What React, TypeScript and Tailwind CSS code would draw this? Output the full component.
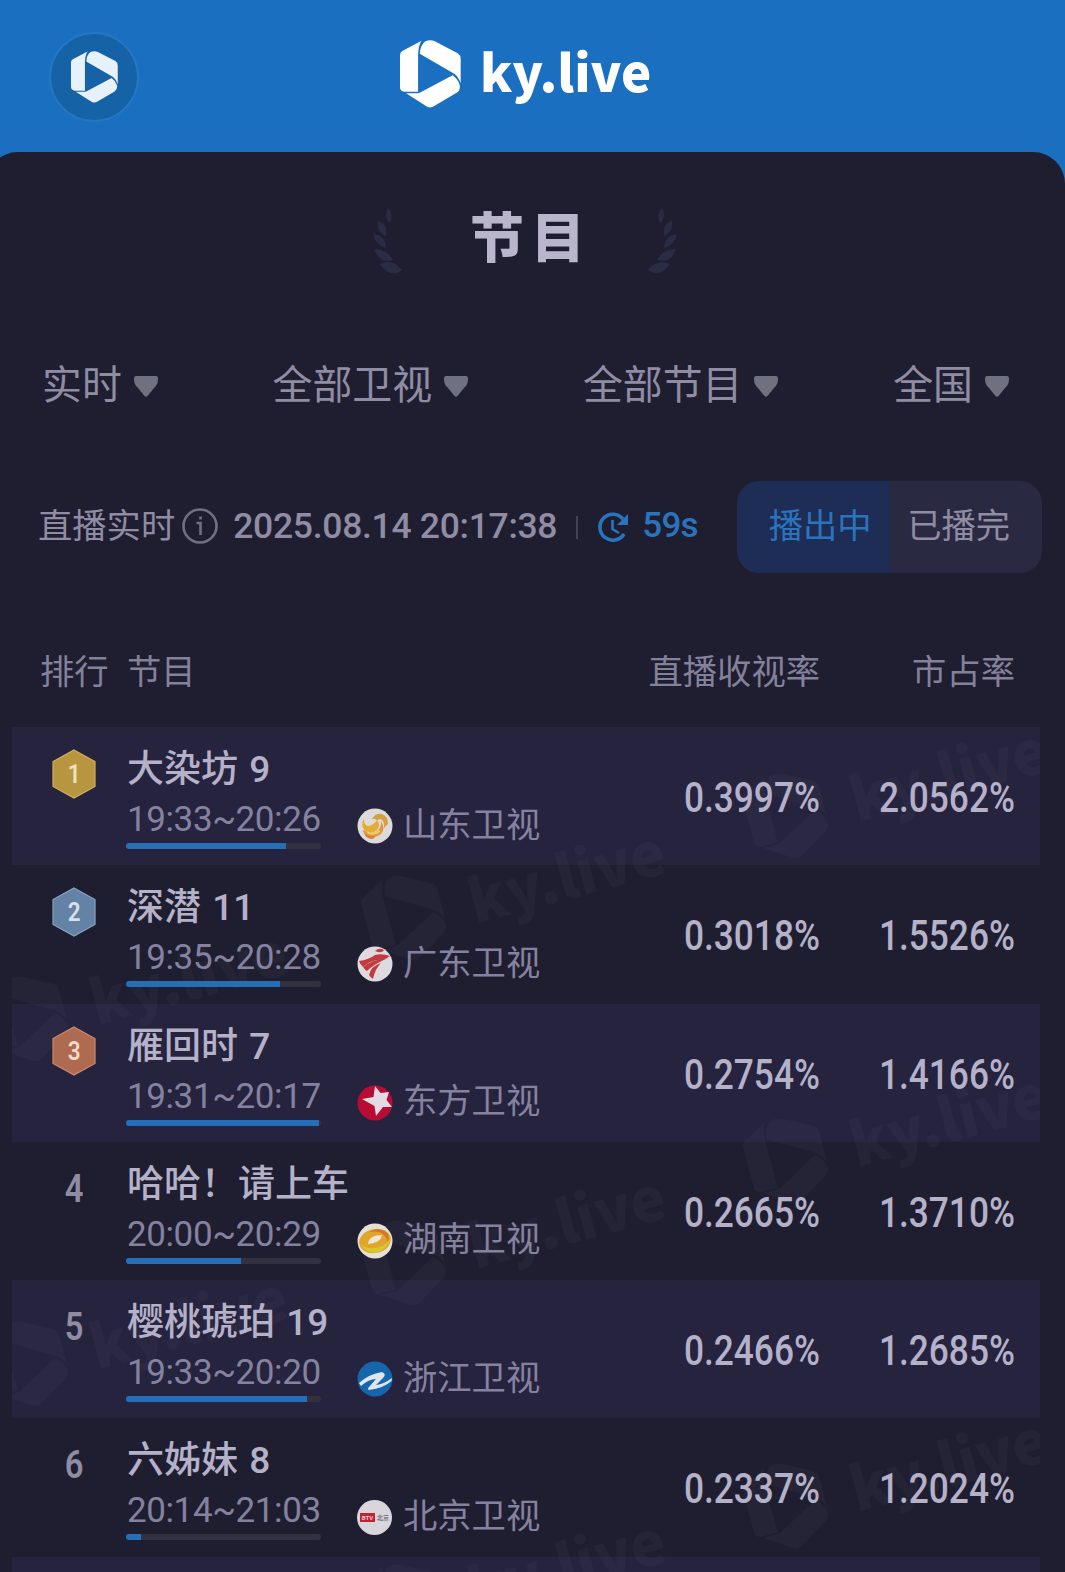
import type { ReactNode } from "react";

type Show = {
  title: string;
  time: string;
  progress: number;
  channel: string;
  logo: ReactNode;
  rate: string;
  share: string;
};

function LogoMark({ className }: { className: string }) {
  return (
    <svg viewBox="0 0 182 206" className={className} fill="currentColor" preserveAspectRatio="none">
      <path d="M0 46Q0 37 7 33L64 2Q55 16 54 44V157H13Q0 154 0 143Z" />
      <path d="M59 42Q61 14 76 4Q90 -3 104 4L172 40Q181 46 181 56V132Q176 114 163 103Z" />
      <path d="M18 161L54 161Q62 160 66 156L157 107Q173 118 178 136Q181 152 169 160L101 201Q91 207 81 202Z" />
    </svg>
  );
}

function Laurel({ className }: { className: string }) {
  return (
    <svg viewBox="0 0 30 66" className={className} fill="#2a2b45">
      <path d="M15 0Q21 6 17 15Q10 9 15 0Z" />
      <path d="M5 13Q15 16 13 28Q3 24 5 13Z" />
      <path d="M0 26Q12 27 13 40Q2 37 0 26Z" />
      <path d="M1 41Q14 41 20 52Q6 56 1 41Z" />
      <path d="M7 56Q20 50 29 62Q17 71 7 56Z" />
    </svg>
  );
}

function Filter({ label }: { label: string }) {
  return (
    <div className="flex items-center gap-[12px]">
      <span className="text-[39.9px] leading-[56px] text-[#8f8ca3]">{label}</span>
      <svg viewBox="0 0 24 21" className="h-[21px] w-[24px]" fill="#70717f">
        <path d="M2 0H22Q24 0 24 3Q24 9 20 12L13.500 20Q12 21.500 10.500 20L4 12Q0 9 0 3Q0 0 2 0Z" />
      </svg>
    </div>
  );
}

const medals = [
  { fill: "#b8963f", edge: "#d0b05c", text: "text-[#eee2bd]" },
  { fill: "#6481a6", edge: "#8aa3c0", text: "text-[#d8e0ec]" },
  { fill: "#ae6b50", edge: "#c98a70", text: "text-[#f0d9cf]" },
];

function Rank({ n }: { n: number }) {
  const medal = medals[n - 1];
  if (!medal) {
    return (
      <div className="mt-[24px] ml-[40px] h-[46px] w-[44px] text-center text-[39px] leading-[46px] font-semibold text-[#8f8ca3]">
        <span className="inline-block scale-x-[0.84]">{n}</span>
      </div>
    );
  }
  return (
    <div className="mt-[22px] ml-[40px] grid h-[50px] w-[44px] place-items-center">
      <svg viewBox="0 0 44 50" className="col-start-1 row-start-1 h-[50px] w-[44px]">
        <path d="M22 1L43 12.500V37.500L22 49L1 37.500V12.500Z" fill={medal.fill} stroke={medal.edge} strokeWidth="1.200" />
      </svg>
      <span className={`col-start-1 row-start-1 mt-[2px] scale-x-90 text-[25px] leading-[28px] font-semibold ${medal.text}`}>{n}</span>
    </div>
  );
}

const shandong = (
  <svg viewBox="0 0 36 36" className="size-[36px]">
    <circle cx="18" cy="18" r="17.500" fill="#dddadb" />
    <path d="M7 10Q6 15 10 18Q16 18 20 12Q24 16 20 22Q14 27 8 23Q3 17 7 10Z" fill="#e3ad30" />
    <path d="M15 11Q18 5 25 6Q31 8 31 16L27 20Q28 12 23 11Q20 13 18 11Z" fill="#d3a13f" />
    <path d="M6 22Q12 26 19 24Q25 20 24 13Q29 20 24 26Q18 31 11 28Q6 26 6 22Z" fill="#e2983a" />
    <path d="M10 24Q16 28 23 23" stroke="#efd266" strokeWidth="1.800" fill="none" />
    <path d="M7 25Q12 29 19 28L16 31Q9 31 7 25Z" fill="#dd7c45" />
  </svg>
);

const guangdong = (
  <svg viewBox="0 0 36 36" className="size-[36px]">
    <circle cx="18" cy="18" r="17.500" fill="#dedbe0" />
    <path d="M2 15Q11 14 18 9Q25 7 33 10Q28 14 20 14Q11 16 6 21Q3 18 2 15Z" fill="#c33a3e" />
    <path d="M6 21Q14 14 31 12Q17 18 10 25Q8 24 6 21Z" fill="#c33a3e" />
    <path d="M12 29Q14 20 24 17Q18 23 16 33Q13 31 12 29Z" fill="#c33a3e" />
    <path d="M18 5Q22 1 27 4Q25 8 18 5Z" fill="#c33a3e" />
  </svg>
);

const dongfang = (
  <svg viewBox="0 0 36 36" className="size-[36px]">
    <circle cx="18" cy="18" r="17.500" fill="#b90c35" />
    <path d="M18 1L23.500 8L32 7L29.500 15L35 22L26 22L19 31L17.500 21L5 14L16.500 12Z" fill="#e2dbe3" />
  </svg>
);

const hunan = (
  <svg viewBox="0 0 36 36" className="size-[36px]">
    <circle cx="18" cy="18" r="17.500" fill="#e4e0da" />
    <ellipse cx="18" cy="18" rx="16" ry="12" fill="#e0a52a" transform="rotate(-12 18 18)" />
    <path d="M3 21Q8 30 19 30Q31 26 34 15Q28 24 18 25Q9 26 3 21Z" fill="#d9c62e" />
    <path d="M12 9Q20 4 28 8Q34 13 30 19Q30 12 22 9Q17 8 12 9Z" fill="#d4752b" />
    <path d="M11 21Q12 12 25 12Q24 20 11 21Z" fill="#eee6d8" />
  </svg>
);

const zhejiang = (
  <svg viewBox="0 0 36 36" className="size-[36px]">
    <circle cx="18" cy="18" r="17.500" fill="#1666ab" />
    <path d="M2 22Q12 13 25 11Q30 13 26 17L19 24Q27 23 35 17L34.500 20Q27 27 12 29Q10 28 12 26L19 18Q12 18 4 25Z" fill="#dfe5ef" />
  </svg>
);

const beijing = (
  <div className="flex size-[35px] items-center justify-center gap-[2px] rounded-full bg-[#d8d6dc]">
    <span className="h-[9px] w-[15px] bg-[#bd2530] text-center text-[6px] leading-[9px] font-bold text-[#ecc9cb]">BTV</span>
    <span className="w-[12px] text-[6px] leading-[9px] font-bold whitespace-nowrap text-[#77757c]">北京</span>
  </div>
);

const shows: Show[] = [
  { title: "大染坊 9", time: "19:33~20:26", progress: 82, channel: "山东卫视", logo: shandong, rate: "0.3997%", share: "2.0562%" },
  { title: "深潜 11", time: "19:35~20:28", progress: 79, channel: "广东卫视", logo: guangdong, rate: "0.3018%", share: "1.5526%" },
  { title: "雁回时 7", time: "19:31~20:17", progress: 99, channel: "东方卫视", logo: dongfang, rate: "0.2754%", share: "1.4166%" },
  { title: "哈哈！请上车", time: "20:00~20:29", progress: 59, channel: "湖南卫视", logo: hunan, rate: "0.2665%", share: "1.3710%" },
  { title: "樱桃琥珀 19", time: "19:33~20:20", progress: 93, channel: "浙江卫视", logo: zhejiang, rate: "0.2466%", share: "1.2685%" },
  { title: "六姊妹 8", time: "20:14~21:03", progress: 7.5, channel: "北京卫视", logo: beijing, rate: "0.2337%", share: "1.2024%" },
];

function Percent({ value, className }: { value: string; className: string }) {
  return (
    <div className={`relative z-10 mt-[46px] text-right text-[42px] leading-[50px] font-medium text-[#b4b1c8] ${className}`}>
      <span className="inline-block origin-right scale-x-[0.84]">{value}</span>
    </div>
  );
}

function ShowRow({ show, n }: { show: Show; n: number }) {
  return (
    <div className={`flex h-[138.25px] pr-[25px] ${n % 2 ? "bg-[#26233f]" : ""}`}>
      <div className="relative z-10 w-[114px] shrink-0">
        <Rank n={n} />
      </div>
      <div className="relative z-10 flex-1">
        <div className="mt-[19px] ml-[1px] h-[46px] text-[37px] leading-[47px] font-medium whitespace-nowrap text-[#b4b1c8] [word-spacing:2px]">{show.title}</div>
        <div className="flex">
          <div className="w-[195px]">
            <div className="mt-[7px] ml-[1px] h-[41px] text-[35px] leading-[42px] tracking-[-0.4px] whitespace-nowrap text-[#8582a0]">{show.time}</div>
            <div className="mt-[3px] h-[6px] overflow-hidden rounded-full bg-[#32313f]">
              <div className="h-full bg-[#266fb8]" style={{ width: `${show.progress}%` }} />
            </div>
          </div>
          <div className="mt-[11px] ml-[36px] flex h-[46px] items-center gap-[10px]">
            <div className="w-[36px]">{show.logo}</div>
            <span className="-mt-[3px] text-[34.3px] leading-[46px] whitespace-nowrap text-[#8582a0]">{show.channel}</span>
          </div>
        </div>
      </div>
      <Percent value={show.rate} className="w-[170px]" />
      <Percent value={show.share} className="w-[195px]" />
    </div>
  );
}

const stamps = [
  { x: 354, y: 249 },
  { x: 736, y: 147 },
  { x: -24, y: 350 },
  { x: 354, y: 594 },
  { x: 736, y: 492 },
  { x: -24, y: 695 },
  { x: 736, y: 837 },
  { x: 354, y: 938 },
];

function Watermarks() {
  return (
    <div className="pointer-events-none absolute inset-0 overflow-hidden">
      {stamps.map((s) => (
        <div
          key={`${s.x}-${s.y}`}
          className="absolute flex origin-[39px_44px] -rotate-[15deg] items-center gap-[27px] text-[#5a5a66] opacity-[0.1]"
          style={{ left: s.x, top: s.y }}
        >
          <LogoMark className="h-[88px] w-[78px]" />
          <span className="-mt-[5px] font-['Noto_Sans_CJK_SC',sans-serif] text-[60px] leading-[88px] font-black">ky.live</span>
        </div>
      ))}
    </div>
  );
}

export default function App() {
  return (
    <div className="h-[1572px] w-[1065px] overflow-hidden bg-[#1a6fc0] font-['Roboto','Noto_Sans_CJK_SC',sans-serif]">
      <header className="grid h-[152px] grid-cols-[400px_auto_1fr] pt-[30px]">
        <div className="mt-[2px] ml-[49px] flex size-[90px] items-center justify-center rounded-full border-2 border-[#2677c2] bg-[#1562a7] text-[#e7f1fb]">
          <LogoMark className="h-[52px] w-[47px]" />
        </div>
        <div className="mt-[10px] flex h-[68px] items-center gap-[19px] text-white">
          <LogoMark className="h-[68px] w-[61px]" />
          <span className="-mt-[9px] font-['Noto_Sans_CJK_SC',sans-serif] text-[51px] leading-[68px] font-black">ky.live</span>
        </div>
      </header>

      <main className="-ml-[14px] h-[1420px] w-[1079px] overflow-hidden rounded-t-[32px] bg-[#1f1e31] pl-[14px]">
        <div className="flex h-[155px] items-start pt-[56px] pl-[373px]">
          <Laurel className="h-[66px] w-[30px]" />
          <h1 className="mt-[-4px] ml-[67px] w-[177px] text-[54px] leading-[72px] font-black tracking-[7px] text-[#b9b6cc]">节目</h1>
          <Laurel className="h-[66px] w-[30px] -scale-x-100" />
        </div>

        <nav className="mt-[51px] flex h-[56px] items-center justify-between pr-[56px] pl-[42px]">
          <Filter label="实时" />
          <Filter label="全部卫视" />
          <Filter label="全部节目" />
          <Filter label="全国" />
        </nav>

        <div className="mt-[67px] flex h-[92px] items-center pl-[38px] text-[34.3px] text-[#8f8ca3]">
          <span>直播实时</span>
          <svg viewBox="0 0 36 36" className="-mt-[2px] ml-[7px] size-[36px]" fill="none" stroke="#716f84" strokeWidth="2.600">
            <circle cx="18" cy="18" r="16.500" />
            <path d="M14.500 15H18.500V27M18.500 8.500V11.500" />
          </svg>
          <span className="-mt-[1px] ml-[15px] w-[326px] text-[35.500px] font-medium tracking-[-0.3px] whitespace-nowrap">2025.08.14 20:17:38</span>
          <span className="ml-[17px] h-[23px] w-[2px] bg-[#444257]" />
          <svg viewBox="0 0 32 32" className="ml-[19px] size-[32px]" fill="none" stroke="#2a74bd" strokeWidth="3.600">
            <path d="M26 8A13 13 0 1 0 27 23" />
            <path d="M31 3V14H20Z" fill="#2a74bd" stroke="none" />
            <path d="M15.500 9V18L22 22" strokeWidth="2.600" />
          </svg>
          <span className="-mt-[1px] ml-[13px] w-[57px] text-[35px] font-medium tracking-[-0.7px] text-[#2a74bd]">59s</span>
          <div className="ml-[38px] flex h-[92px] w-[305px] overflow-hidden rounded-[22px] bg-[#2a2942]">
            <div className="flex w-[152px] items-center justify-center bg-[#1e2d55] pl-[14px] text-[#2a74bd]">播出中</div>
            <div className="flex flex-1 items-center justify-center pr-[14px]">已播完</div>
          </div>
        </div>

        <section className="relative mt-[52px] ml-[12px] w-[1028px]">
          <div className="flex h-[102px] items-center pr-[25px] pl-[28px] text-[34.3px] leading-[46px] text-[#84819b]">
            <span className="-mt-[8px] w-[87px]">排行</span>
            <span className="-mt-[8px] flex-1">节目</span>
            <span className="-mt-[8px]">直播收视率</span>
            <span className="-mt-[8px] w-[195px] text-right">市占率</span>
          </div>
          {shows.map((show, i) => (
            <ShowRow key={show.title} show={show} n={i + 1} />
          ))}
          <div className="h-[20px] bg-[#26233f]" />
          <Watermarks />
        </section>
      </main>
    </div>
  );
}
